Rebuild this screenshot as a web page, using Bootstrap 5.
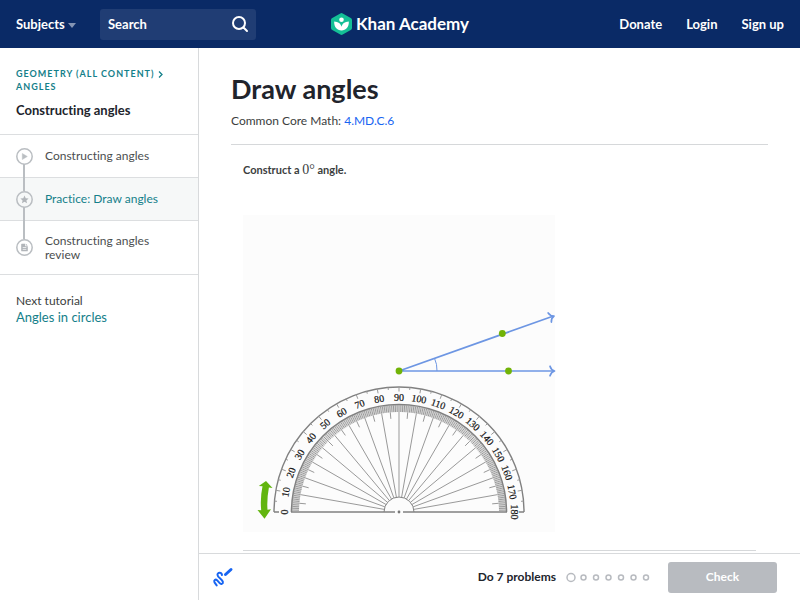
<!DOCTYPE html>
<html lang="en">
<head>
<meta charset="utf-8">
<meta name="viewport" content="width=device-width, initial-scale=1">
<title>Draw angles | Khan Academy</title>
<link href="https://cdn.jsdelivr.net/npm/bootstrap@5.3.0/dist/css/bootstrap.min.css" rel="stylesheet">
<style>
  body { font-family: Lato, "Open Sans", sans-serif; font-size: 12px; line-height: 16px; color: #3b3e40; font-variant-ligatures: none; }
  a { text-decoration: none; }
  svg { flex-shrink: 0; overflow: visible; }
  .topbar { background: #0a2a66; height: 48px; padding: 0 16px; display: grid; grid-template-columns: 1fr auto 1fr; align-items: center; }
  .topbar a, .topbar button, .topbar input { color: #fff; font-weight: 700; font-size: 13px; }
  .subjects { background: none; border: 0; padding: 0; width: 84px; text-align: left; }
  .search-field { background: #203d74; border-radius: 3px; width: 156px; height: 31px; padding: 0 8px; }
  .search-field input { background: none; border: 0; outline: 0; min-width: 0; padding: 0; }
  .search-field input::placeholder { color: #fff; opacity: 1; }
  .search-field button { background: none; border: 0; padding: 0; line-height: 0; }
  .topbar .brand { font-size: 17px; line-height: 24px; }
  .account { gap: 24px; }
  .side { width: 199px; border-right: 1px solid #d8dadc; }
  .side-head { padding: 19px 16px 14px; }
  .teal, .lesson.current { color: #14808a; }
  .crumbs { font-size: 9px; line-height: 13px; letter-spacing: 1px; font-weight: 700; }
  .unit { font-size: 13px; line-height: 19px; font-weight: 700; color: #21242c; }
  .lesson { min-height: 43px; padding: 6px 16px; gap: 12px; border-top: 1px solid #dcdee0; line-height: 14px; color: #4b4e50; position: relative; }
  .lesson.current { background: #f6f8f8; }
  .lesson.long { min-height: 55px; border-bottom: 1px solid #dcdee0; }
  .lesson:not(.long)::after { content: ""; position: absolute; left: 23px; top: calc(50% + 8px); height: 27px; width: 2px; background: #babec2; z-index: 1; }
  .lesson.current::after { height: 32px; }
  .next { padding: 18px 16px; }
  .next-link { font-size: 13px; line-height: 17px; }
  .article { padding: 24px 32px 0; }
  h1 { font-size: 27px; line-height: 33px; font-weight: 700; color: #21242c; }
  .blue { color: #1865f2; }
  .rule { border-top: 1px solid #d6d8da; }
  .standard { margin-bottom: 15px; }
  .exercise { padding: 0 12px; }
  .prompt { font-size: 11px; line-height: 18px; font-weight: 700; }
  .num { font: 14px/16px "Liberation Serif", serif; }
  .figure-area { background: #fcfcfc; width: 312px; max-width: 100%; margin: 36px 0 18px; }
  .tray { height: 47px; padding: 0 23px 0 14px; border-top: 1px solid #d8dadc; background: #fff; }
  .goal { font-weight: 700; color: #21242c; }
  .check { width: 109px; height: 31px; border: 0; border-radius: 3px; background: #b8bbc0; color: #fff; font-weight: 700; }
  .scribble { background: none; border: 0; padding: 0; line-height: 0; }
</style>
<script src="https://cdn.jsdelivr.net/npm/bootstrap@5.3.0/dist/js/bootstrap.bundle.min.js"></script>
</head>
<body class="vh-100 d-flex flex-column overflow-hidden">
<header class="topbar flex-shrink-0">
  <div class="d-flex align-items-center">
    <button class="subjects" type="button">Subjects <svg width="8" height="5" viewBox="0 0 8 5" aria-hidden="true"><path d="M0 0h8L4 5z" fill="#8494b3"/></svg></button>
    <form class="search-field d-flex align-items-center" role="search">
      <input class="flex-fill" type="search" placeholder="Search" aria-label="Search">
      <button type="button" aria-label="Submit search"><svg width="16" height="16" viewBox="0 0 16 16" fill="none" stroke="#fff" stroke-width="2" stroke-linecap="round"><circle cx="7" cy="7" r="6"/><path d="m11.5 11.5 3.5 3.5"/></svg></button>
    </form>
  </div>
  <a class="brand d-flex align-items-center gap-1" href="#">
    <svg width="21" height="22" viewBox="0 0 21 22" aria-hidden="true"><path d="M9.3.4q1.2-.7 2.4 0l8 4.5q1.3.7 1.3 2v8.2q0 1.300-1.300 2l-8 4.500q-1.200.700-2.400 0l-8-4.500q-1.300-.700-1.300-2V6.900q0-1.300 1.300-2z" fill="#14bf96"/><circle cx="10.500" cy="6.800" r="2.300" fill="#fff"/><path d="M3.200 8.500c4 .2 6.700 2.200 7.300 5.300.6-3.100 3.300-5.100 7.300-5.300.3 5.300-2.800 9-7.300 9s-7.600-3.700-7.300-9z" fill="#fff"/></svg>
    <span>Khan Academy</span>
  </a>
  <nav class="account d-flex justify-content-end" aria-label="Account"><a href="#">Donate</a><a href="#">Login</a><a href="#">Sign up</a></nav>
</header>
<div class="d-flex flex-fill overflow-hidden">
  <aside class="side flex-shrink-0">
    <div class="side-head">
      <div class="crumbs"><a class="teal" href="#">GEOMETRY (ALL CONTENT)</a> <svg width="5" height="7" viewBox="0 0 5 7" fill="none" stroke="#14808a" stroke-width="1.300" aria-hidden="true"><path d="m1 .5 3 3-3 3"/></svg><br><a class="teal" href="#">ANGLES</a></div>
      <div class="unit mt-2">Constructing angles</div>
    </div>
    <nav aria-label="Lessons">
      <a class="lesson d-flex align-items-center" href="#"><svg width="17" height="17" viewBox="0 0 17 17" aria-hidden="true"><circle cx="8.500" cy="8.500" r="7.700" fill="#fff" stroke="#babec2" stroke-width="1.500"/><path d="M6.300 5.500v6l5-3z" fill="#babec2" stroke="#babec2" stroke-linejoin="round" stroke-width=".5"/></svg><span>Constructing angles</span></a>
      <a class="lesson current d-flex align-items-center" href="#" aria-current="page"><svg width="17" height="17" viewBox="0 0 17 17" aria-hidden="true"><circle cx="8.500" cy="8.500" r="7.700" fill="#f6f8f8" stroke="#babec2" stroke-width="1.500"/><path d="m8.500 4.500 1.200 2.700 2.900.3-2.200 1.900.7 2.900-2.600-1.500-2.600 1.500.7-2.900-2.200-1.900 2.900-.3z" fill="#b1b5b9"/></svg><span>Practice: Draw angles</span></a>
      <a class="lesson long d-flex align-items-center" href="#"><svg width="17" height="17" viewBox="0 0 17 17" aria-hidden="true"><circle cx="8.500" cy="8.500" r="7.700" fill="#fff" stroke="#babec2" stroke-width="1.500"/><path d="M5.700 4.700h3.500v2.600h2.600v4.500q0 .5-.5.500H5.700q-.5 0-.5-.5V5.200q0-.5.500-.5zM9.900 4.700l1.900 1.900H9.900z" fill="#b1b5b9"/><path d="M6.700 8.500h3.600M6.700 10.400h3.600" stroke="#fff" stroke-width=".7"/></svg><span>Constructing angles<br>review</span></a>
    </nav>
    <div class="next"><div>Next tutorial</div><a class="teal next-link" href="#">Angles in circles</a></div>
  </aside>
  <div class="d-flex flex-column flex-fill overflow-hidden">
    <main class="article flex-fill overflow-auto">
      <h1 class="mb-2">Draw angles</h1>
      <div class="standard">Common Core Math: <a class="blue" href="#">4.MD.C.6</a></div>
      <div class="rule"></div>
      <section class="exercise">
        <p class="prompt mt-3 mb-0">Construct a <span class="num">0<span aria-label="degrees">°</span></span> angle.</p>
        <div class="figure-area">
          <svg id="protractor" class="d-block w-100" viewBox="0 0 312 317" role="img" aria-label="Protractor with an adjustable angle">
            <g fill="none" stroke="#6d96e3" stroke-width="1.700">
              <path d="M156 156H311M156 156 310.500 101"/>
              <path stroke-linecap="round" stroke-linejoin="round" d="M307 151.200c.8 2.600 2.300 4.200 4.500 4.800-2.200.6-3.700 2.200-4.500 4.800"/>
              <path stroke-linecap="round" stroke-linejoin="round" transform="translate(311 101) rotate(-19.500)" d="M-4.500-4.800c.8 2.600 2.300 4.200 4.500 4.800-2.200.6-3.700 2.200-4.500 4.800"/>
              <path d="M194 156q.200-7-2.500-12.700" stroke-width="1"/>
            </g>
            <g fill="#71b307"><circle cx="156" cy="156" r="3.400"/><circle cx="265.500" cy="156" r="3.400"/><circle cx="259.300" cy="118.500" r="3.400"/></g>
            <g fill="none" stroke="#808080"><path d="M31 297a125 125 0 0 1 250 0" stroke-width="1.400"/><path d="M48.500 297a107.500 107.500 0 0 1 215 0" stroke-width="1.600"/><path d="M141 297a15 15 0 0 1 30 0"/><path d="M48 297H152M160 297H264M31 297h5M276 297h5" stroke-width="1.300"/></g>
            <circle cx="156" cy="297" r="1.400" fill="#777"/>
            <path d="M23 266 29.500 273l-3.600-.4q-2.200 12-1.400 22.200l3.500-.5-6.500 9.500-7-8.800 3.700.3q-1.200-12 1.300-24l-3.700-.3z" fill="#62b50f"/>
            <g id="marks" stroke="#999"></g>
            <g id="degrees" font-family="Liberation Serif, serif" font-size="10" text-anchor="middle" fill="#111" stroke="#111" stroke-width=".2"></g>
          </svg>
        </div>
        <div class="rule"></div>
      </section>
    </main>
    <footer class="tray d-flex align-items-center flex-shrink-0">
      <button class="scribble me-auto" type="button" aria-label="Scratchpad"><svg width="20" height="20" viewBox="0 0 20 20" fill="none" stroke="#1865f2" stroke-linecap="round" stroke-linejoin="round"><path d="M9 8C8.500 5 4.300 5.200 4.500 8c.2 2.500 5 4.500 5.400 7 .3 2-2 2.600-3.200 1.200L4 13.200c-1.500-1.400-3.500.3-2.500 2.200l2.200 3" stroke-width="2"/><path d="m12.500 7.500 5.500-5" stroke-width="3"/></svg></button>
      <span class="goal">Do 7 problems</span>
      <svg class="ms-2 me-3" width="88" height="11" viewBox="0 0 88 11" fill="none" stroke="#b8bbc0" stroke-width="1.500" role="img" aria-label="0 of 7 problems done"><circle cx="7" cy="5.500" r="4"/><circle cx="19.500" cy="5.500" r="2.500"/><circle cx="32" cy="5.500" r="2.500"/><circle cx="44.500" cy="5.500" r="2.500"/><circle cx="57" cy="5.500" r="2.500"/><circle cx="69.500" cy="5.500" r="2.500"/><circle cx="82" cy="5.500" r="2.500"/></svg>
      <button class="check" type="button">Check</button>
    </footer>
  </div>
</div>
<script>
  // Protractor scale: fine band, five-degree ticks, ten-degree rays and labels.
  const ns = 'http://www.w3.org/2000/svg', cx = 156, cy = 297;
  const marks = document.getElementById('marks'), degrees = document.getElementById('degrees');
  function ray(angle, r1, r2, width) {
    const line = document.createElementNS(ns, 'line'), t = angle * Math.PI / 180;
    line.setAttribute('x1', cx - r1 * Math.cos(t));
    line.setAttribute('y1', cy - r1 * Math.sin(t));
    line.setAttribute('x2', cx - r2 * Math.cos(t));
    line.setAttribute('y2', cy - r2 * Math.sin(t));
    line.setAttribute('stroke-width', width);
    marks.appendChild(line);
  }
  for (let a = 1; a < 180; a++) {
    ray(a, 100, 107, 1);
    ray(a + 0.5, 100, 107, 0.4);
    if (a % 10 === 0) { ray(a, 15, 100, 1); ray(a, 120.5, 125, 1); }
    else if (a % 5 === 0) { ray(a, 93.5, 100, 1); ray(a, 122.5, 125, 1); }
  }
  for (let a = 0; a <= 180; a += 10) {
    const label = document.createElementNS(ns, 'text');
    label.setAttribute('transform', `rotate(${a - 90} ${cx} ${cy})`);
    label.setAttribute('x', cx);
    label.setAttribute('y', cy - 111.5);
    label.textContent = a;
    degrees.appendChild(label);
  }
</script>
</body>
</html>
